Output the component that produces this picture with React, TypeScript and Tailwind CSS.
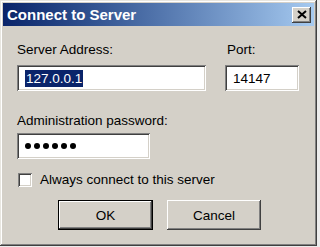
import React from 'react';

const sunken =
  'bg-white shadow-[inset_1px_1px_#808080,inset_-1px_-1px_#ffffff,inset_2px_2px_#404040,inset_-2px_-2px_#d4d0c8]';
const raised =
  'bg-[#d4d0c8] shadow-[inset_-1px_-1px_#404040,inset_1px_1px_#ffffff,inset_-2px_-2px_#808080]';

export default function App() {
  return (
    <div
      className="w-[320px] h-[247px] bg-[#ececec] text-black"
      style={{ fontFamily: '"Liberation Sans", Arial, sans-serif' }}
    >
      <div className="w-[317px] h-[246px] p-[3px] bg-[#d4d0c8] flex flex-col shadow-[inset_-1px_-1px_#404040,inset_1px_1px_#e8e6e0,inset_-2px_-2px_#808080,inset_2px_2px_#ffffff]">
        {/* Title bar */}
        <div className="h-[23px] flex items-center justify-between pl-[4px] pr-[3px] bg-gradient-to-r from-[#0a246a] to-[#a6caf0]">
          <span className="text-white font-bold text-[15px] leading-none">Connect to Server</span>
          <button className={`w-[19px] h-[16px] flex items-center justify-center ${raised}`}>
            <svg width="10" height="9" viewBox="0 0 10 9">
              <path d="M1 1 L9 8 M9 1 L1 8" stroke="#000" strokeWidth="2" />
            </svg>
          </button>
        </div>

        {/* Body */}
        <div className="flex-1 flex flex-col pl-[14px] pt-[16px] text-[13.5px] leading-[15px]">
          <div className="flex">
            <div className="flex flex-col w-[189px]">
              <span>Server Address:</span>
              <div className={`mt-[8px] h-[26px] flex items-center pl-[8px] ${sunken}`}>
                <span className="bg-[#0a246a] text-white h-[17px] px-[1px] flex items-center">127.0.0.1</span>
              </div>
            </div>
            <div className="flex flex-col w-[74px] ml-[19px]">
              <span className="pl-[2px]">Port:</span>
              <div className={`mt-[8px] h-[26px] flex items-center pl-[8px] ${sunken}`}>
                <span>14147</span>
              </div>
            </div>
          </div>

          <span className="mt-[22px]">Administration password:</span>
          <div className={`mt-[5px] w-[133px] h-[26px] flex items-center gap-[3px] pl-[8px] ${sunken}`}>
            {[0, 1, 2, 3, 4, 5].map((i) => (
              <span key={i} className="w-[6px] h-[6px] rounded-full bg-black" />
            ))}
          </div>

          <label className="mt-[13px] flex items-center">
            <span className={`w-[14px] h-[14px] ml-[1px] ${sunken}`} />
            <span className="ml-[8px]">Always connect to this server</span>
          </label>

          <div className="mt-[13px] flex pl-[41px] gap-[14px]">
            <button className="w-[95px] h-[30px] border border-black">
              <div className={`w-full h-full flex items-center justify-center ${raised}`}>OK</div>
            </button>
            <button className={`w-[94px] h-[30px] flex items-center justify-center ${raised}`}>Cancel</button>
          </div>
        </div>
      </div>
    </div>
  );
}
